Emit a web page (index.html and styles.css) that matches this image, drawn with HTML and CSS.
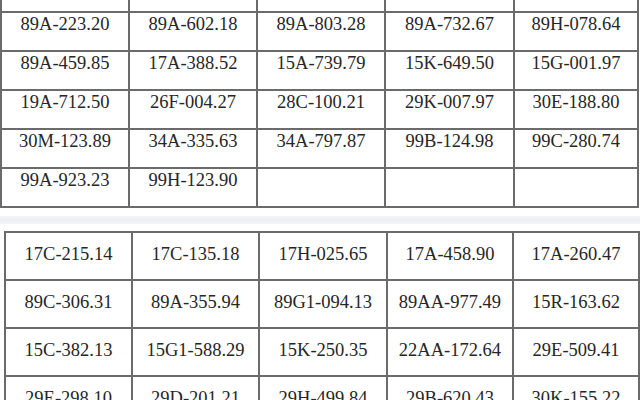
FILE: index.html
```html
<!DOCTYPE html>
<html>
<head>
<meta charset="utf-8">
<link rel="stylesheet" href="styles.css">
</head>
<body>
<div class="shot shot-top">
  <div class="grid grid-top">
    <div class="cell"></div><div class="cell"></div><div class="cell"></div><div class="cell"></div><div class="cell c5"></div>
    <div class="cell">89A-223.20</div><div class="cell">89A-602.18</div><div class="cell">89A-803.28</div><div class="cell">89A-732.67</div><div class="cell c5">89H-078.64</div>
    <div class="cell">89A-459.85</div><div class="cell">17A-388.52</div><div class="cell">15A-739.79</div><div class="cell">15K-649.50</div><div class="cell c5">15G-001.97</div>
    <div class="cell">19A-712.50</div><div class="cell">26F-004.27</div><div class="cell">28C-100.21</div><div class="cell">29K-007.97</div><div class="cell c5">30E-188.80</div>
    <div class="cell">30M-123.89</div><div class="cell">34A-335.63</div><div class="cell">34A-797.87</div><div class="cell">99B-124.98</div><div class="cell c5">99C-280.74</div>
    <div class="cell">99A-923.23</div><div class="cell">99H-123.90</div><div class="cell"></div><div class="cell"></div><div class="cell c5"></div>
  </div>
</div>
<div class="sep"></div>
<div class="shot shot-bottom">
  <div class="grid grid-bottom">
    <div class="cell">17C-215.14</div><div class="cell">17C-135.18</div><div class="cell">17H-025.65</div><div class="cell">17A-458.90</div><div class="cell">17A-260.47</div>
    <div class="cell">89C-306.31</div><div class="cell">89A-355.94</div><div class="cell">89G1-094.13</div><div class="cell">89AA-977.49</div><div class="cell">15R-163.62</div>
    <div class="cell">15C-382.13</div><div class="cell">15G1-588.29</div><div class="cell">15K-250.35</div><div class="cell">22AA-172.64</div><div class="cell">29E-509.41</div>
    <div class="cell">29E-298.10</div><div class="cell">29D-201.21</div><div class="cell">29H-499.84</div><div class="cell">29B-620.43</div><div class="cell">30K-155.22</div>
  </div>
</div>
</body>
</html>
```

FILE: styles.css
```css
html, body {
  margin: 0;
  padding: 0;
  background: #ffffff;
  width: 640px;
  height: 400px;
  overflow: hidden;
}

body {
  font-family: "Liberation Serif", "Times New Roman", serif;
  color: #262626;
}

.shot {
  background: #ffffff;
  overflow: hidden;
}

.shot-top {
  height: 216px;
}

.sep {
  height: 8px;
  background: linear-gradient(#f6f6f9, #eceef4 50%, #f6f6f9);
}

.shot-bottom {
  height: 176px;
  padding: 7px 0 0 4px;
  box-sizing: border-box;
}

.grid {
  display: grid;
  border-left: 2px solid #6b6b6b;
  border-top: 2px solid #6b6b6b;
}

.grid-top {
  margin-top: -28px;
  grid-template-columns: 128px 128px 128px 129px 124px;
  grid-auto-rows: 39px;
  width: 637px;
}

.grid-bottom {
  grid-template-columns: 127px 127px 128px 126px 126px;
  grid-auto-rows: 48px;
  width: 634px;
}

.cell {
  border-right: 2px solid #6b6b6b;
  border-bottom: 2px solid #6b6b6b;
  font-size: 18.5px;
  line-height: 22px;
  text-align: center;
  white-space: nowrap;
}

.grid-top .cell {
  padding-top: 0;
}

.grid-bottom .cell {
  display: flex;
  align-items: center;
  justify-content: center;
  padding-bottom: 5px;
  box-sizing: border-box;
}
```
